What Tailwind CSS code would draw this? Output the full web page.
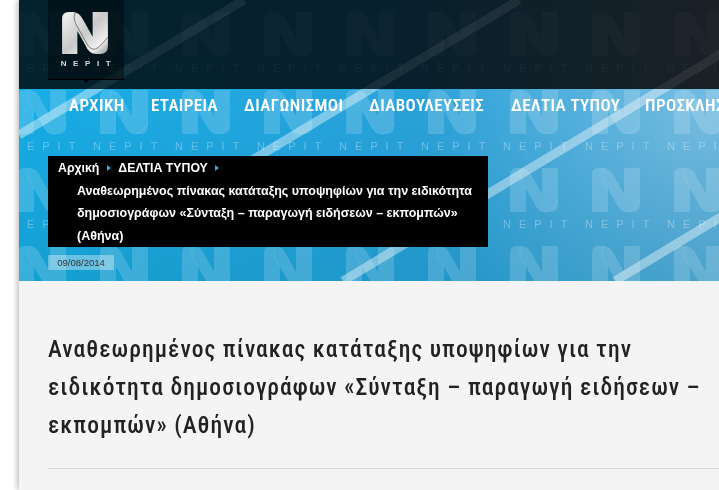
<!DOCTYPE html>
<html lang="el">
<head>
<meta charset="utf-8">
<title>ΝΕΡΙΤ</title>
<script src="https://cdn.jsdelivr.net/npm/@tailwindcss/browser@4"></script>
</head>
<body class="bg-white overflow-hidden h-[490px] w-[719px]">
<div class="ml-[19px] h-[490px] bg-[#f4f4f4] shadow-[-2px_0_5px_rgba(0,0,0,0.25)] overflow-hidden">
  <div class="relative h-[281px] w-[700px] overflow-hidden">
    <svg class="absolute inset-0" width="700" height="281" viewBox="0 0 700 281" aria-hidden="true">
      <defs>
        <linearGradient id="dark" x1="0" x2="1" y1="0" y2="0"><stop offset="0" stop-color="#03222e"/><stop offset="0.55" stop-color="#07202c"/><stop offset="1" stop-color="#1a2026"/></linearGradient>
        <linearGradient id="blue" x1="0" x2="1" y1="0" y2="0"><stop offset="0" stop-color="#17ade6"/><stop offset="0.6" stop-color="#2ba2da"/><stop offset="1" stop-color="#47a6d8"/></linearGradient>
        <radialGradient id="glow" gradientUnits="userSpaceOnUse" cx="680" cy="120" r="280"><stop offset="0" stop-color="#fff" stop-opacity="0.26"/><stop offset="1" stop-color="#fff" stop-opacity="0"/></radialGradient>
        <linearGradient id="shade" x1="0" x2="0" y1="0" y2="1"><stop offset="0" stop-color="#08628f" stop-opacity="0"/><stop offset="1" stop-color="#08708f" stop-opacity="0.22"/></linearGradient>
        <pattern id="pd" patternUnits="userSpaceOnUse" x="-8" y="12" width="82" height="78">
          <path d="M7 7Q7 0 14 0H18Q25 0 29 8L39 26V0H55V36Q55 44 47 44H43Q35 44 31 34L23 20V44H7Z" fill="#fff" fill-opacity="0.02"/>
          <text x="0" y="60" font-family="Liberation Sans" font-size="11" letter-spacing="8" fill="#fff" fill-opacity="0.035">NEPIT</text>
        </pattern>
        <pattern id="pb" patternUnits="userSpaceOnUse" x="-8" y="12" width="82" height="78">
          <path d="M7 7Q7 0 14 0H18Q25 0 29 8L39 26V0H55V36Q55 44 47 44H43Q35 44 31 34L23 20V44H7Z" fill="#fff" fill-opacity="0.16"/>
          <path d="M19 0Q15 6 18 12L31 34Q35 44 43 44Q50 42 55 32" fill="none" stroke="#fff" stroke-opacity="0.08"/>
          <text x="0" y="60" font-family="Liberation Sans" font-size="11" letter-spacing="8" fill="#fff" fill-opacity="0.3">NEPIT</text>
        </pattern>
        <clipPath id="cd"><rect width="700" height="89"/></clipPath>
        <clipPath id="cb"><rect y="89" width="700" height="192"/></clipPath>
      </defs>
      <rect width="700" height="89" fill="url(#dark)"/>
      <rect y="89" width="700" height="192" fill="url(#blue)"/>
      <rect y="89" width="700" height="192" fill="url(#glow)"/>
      <rect y="89" width="700" height="192" fill="url(#shade)"/>
      <rect width="700" height="89" fill="url(#pd)"/>
      <rect y="89" width="700" height="192" fill="url(#pb)"/>
      <g clip-path="url(#cd)" stroke="#fff" stroke-opacity="0.07" stroke-width="9">
        <path d="M0 135L225 0"/><path d="M230 162L500 0"/><path d="M324 281L780 7"/>
      </g>
      <g clip-path="url(#cb)" stroke="#fff" stroke-opacity="0.4" stroke-width="9">
        <path d="M0 135L225 0"/><path d="M230 162L500 0"/><path d="M324 281L780 7"/><path d="M596 281L720 206"/>
      </g>
    </svg>

    <div class="relative blur-[0.3px]">
      <header class="h-[89px] pl-[29px]">
        <div class="relative w-[76px] h-[80px] bg-black/40 border-b border-black flex flex-col items-center">
          <svg class="mt-[12px] ml-[-2px]" width="50" height="42" viewBox="0 0 48 44" aria-hidden="true">
            <defs>
              <linearGradient id="sil" x1="0" x2="1" y1="0" y2="1"><stop offset="0" stop-color="#f4f4f4"/><stop offset="0.5" stop-color="#c9c9c9"/><stop offset="0.8" stop-color="#f0f0f0"/><stop offset="1" stop-color="#8e8e8e"/></linearGradient>
            </defs>
            <path d="M0 7Q0 0 7 0H11Q18 0 22 8L32 26V0H48V36Q48 44 40 44H36Q28 44 24 34L16 20V44H0Z" fill="url(#sil)"/>
            <path d="M14 0Q11 6 14 12L27 35Q32 42 38 37Q44 32 48 26" fill="none" stroke="#777" stroke-width="1"/>
          </svg>
          <span class="mt-[4px] pl-[6px] text-[8px] leading-[12px] tracking-[6.6px] font-bold text-[#d8d8d8] font-['Liberation_Sans']">NEPIT</span>
          <span class="absolute left-1/2 -translate-x-[4px] top-full border-x-[4px] border-t-[4px] border-x-transparent border-t-black"></span>
        </div>
      </header>

      <nav class="h-[34px] pl-[50px] flex items-center gap-[26px] whitespace-nowrap text-white text-[17px] tracking-[0.4px] font-semibold font-['Roboto'] [font-stretch:75%]">
        <a class="w-[56px] shrink-0">ΑΡΧΙΚΗ</a>
        <a class="w-[67px] shrink-0">ΕΤΑΙΡΕΙΑ</a>
        <a class="w-[99px] shrink-0">ΔΙΑΓΩΝΙΣΜΟΙ</a>
        <a class="w-[116px] shrink-0">ΔΙΑΒΟΥΛΕΥΣΕΙΣ</a>
        <a class="w-[108px] shrink-0">ΔΕΛΤΙΑ ΤΥΠΟΥ</a>
        <a class="shrink-0">ΠΡΟΣΚΛΗΣΕΙΣ</a>
      </nav>

      <div class="ml-[29px] mt-[33px] w-[440px] h-[91px] bg-black text-white font-bold font-['Liberation_Sans'] text-[12.5px] leading-[22.5px] px-[10px] pt-[1px]">
        <div class="flex items-center text-[12.3px]">
          <span>Αρχική</span>
          <span class="mx-[7.5px] border-y-[3px] border-l-[4px] border-y-transparent border-l-[#29a9e0]"></span>
          <span>ΔΕΛΤΙΑ ΤΥΠΟΥ</span>
          <span class="mx-[7.5px] border-y-[3px] border-l-[4px] border-y-transparent border-l-[#29a9e0]"></span>
        </div>
        <p class="pl-[19px]">Αναθεωρημένος πίνακας κατάταξης υποψηφίων για την ειδικότητα δημοσιογράφων «Σύνταξη – παραγωγή ειδήσεων – εκπομπών» (Αθήνα)</p>
      </div>

      <div class="ml-[29px] mt-[8px] w-[66px] h-[15px] bg-white/35 text-[#333] text-[9.5px] leading-[15px] text-center font-['Liberation_Sans']">09/08/2014</div>
    </div>
  </div>

  <main class="pl-[29px] pt-[49px] blur-[0.3px]">
    <h1 class="text-[23.5px] leading-[38px] tracking-[1.05px] font-medium text-[#222] font-['Roboto'] [font-stretch:75%] w-[670px]">Αναθεωρημένος πίνακας κατάταξης υποψηφίων για την ειδικότητα δημοσιογράφων «Σύνταξη – παραγωγή ειδήσεων – εκπομπών» (Αθήνα)</h1>
    <hr class="mt-[24px] border-t border-[#d9d9d9]">
  </main>
</div>
</body>
</html>
